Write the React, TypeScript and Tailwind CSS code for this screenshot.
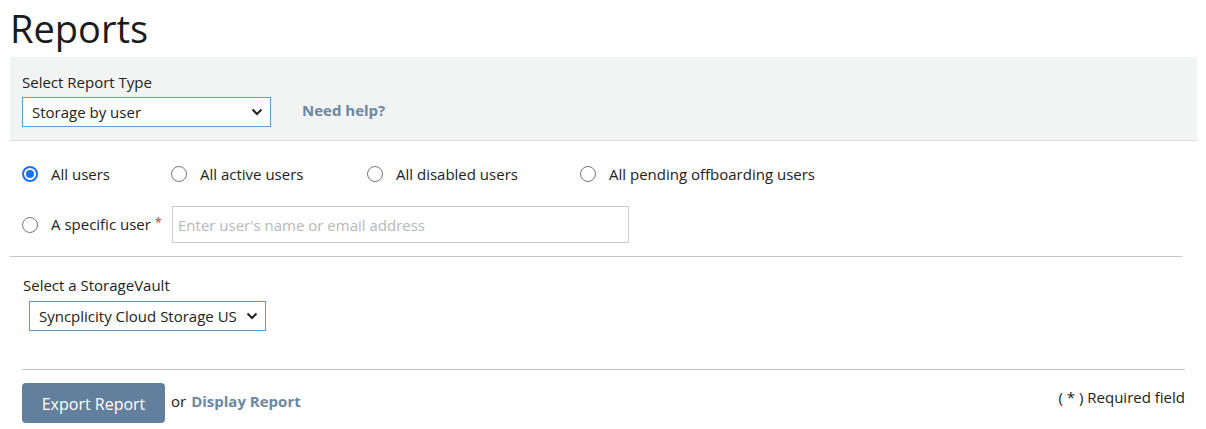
import { useState } from 'react';

const font = { fontFamily: '"Open Sans", "Noto Sans", sans-serif' };

function Chevron() {
  return (
    <svg width="12" height="8" viewBox="0 0 12 8" className="text-[#222]">
      <path d="M1.5 1.5 L6 6 L10.5 1.5" fill="none" stroke="currentColor" strokeWidth="2" />
    </svg>
  );
}

function Radio({ checked, label, onClick }: { checked: boolean; label: React.ReactNode; onClick: () => void }) {
  return (
    <label onClick={onClick} className="flex items-center cursor-pointer">
      {checked ? (
        <span className="w-[16px] h-[16px] rounded-full border-2 border-[#1a73e8] flex items-center justify-center">
          <span className="w-[8px] h-[8px] rounded-full bg-[#1a73e8]"></span>
        </span>
      ) : (
        <span className="w-[16px] h-[16px] rounded-full border border-[#767676] bg-white"></span>
      )}
      <span className="ml-[13px] text-[#222]">{label}</span>
    </label>
  );
}

export default function App() {
  const [scope, setScope] = useState('all');

  return (
    <div className="bg-white w-[1206px] h-[429px] overflow-hidden text-[15px] text-[#222]" style={font}>
      <h1 className="ml-[10px] pt-[1px] text-[38px] leading-[54px] text-[#1b1b1b]">Reports</h1>

      {/* Report type */}
      <div className="ml-[10px] mr-[9px] mt-[2px] h-[84px] bg-[#f2f3f3] border-b border-[#dcdcdc] pl-[12px] pt-[15px]">
        <div className="leading-[20px]">Select Report Type</div>
        <div className="flex items-center mt-[5px]">
          <div className="w-[249px] h-[30px] bg-white border border-[#5aa0d8] flex items-center justify-between pl-[9px] pr-[7px]">
            <span>Storage by user</span>
            <Chevron />
          </div>
          <a className="ml-[31px] font-bold text-[#6c87a3] -mt-[4px]">Need help?</a>
        </div>
      </div>

      {/* Users */}
      <div className="ml-[22px] mt-[21px] flex items-center h-[24px]">
        <div className="w-[149px]"><Radio checked={scope === 'all'} label="All users" onClick={() => setScope('all')} /></div>
        <div className="w-[196px]"><Radio checked={scope === 'active'} label="All active users" onClick={() => setScope('active')} /></div>
        <div className="w-[213px]"><Radio checked={scope === 'disabled'} label="All disabled users" onClick={() => setScope('disabled')} /></div>
        <Radio checked={scope === 'pending'} label="All pending offboarding users" onClick={() => setScope('pending')} />
      </div>
      <div className="ml-[22px] mt-[20px] flex items-center">
        <div className="w-[150px]">
          <Radio
            checked={scope === 'specific'}
            label={<>A specific user <span className="text-[#e0262c] text-[13px] align-top">*</span></>}
            onClick={() => setScope('specific')}
          />
        </div>
        <input
          className="w-[457px] h-[37px] border border-[#cccccc] px-[5px] text-[15px] placeholder:text-[#b8b8b8] outline-none"
          placeholder="Enter user's name or email address"
        />
      </div>
      <div className="ml-[10px] w-[1172px] mt-[13px] border-t border-[#c4c4c4]"></div>

      {/* Vault */}
      <div className="ml-[23px] mt-[18px] leading-[20px]">Select a StorageVault</div>
      <div className="ml-[29px] mt-[6px] w-[237px] h-[30px] border border-[#5aa0d8] flex items-center justify-between pl-[9px] pr-[7px]">
        <span>Syncplicity Cloud Storage US</span>
        <Chevron />
      </div>
      <div className="ml-[22px] w-[1163px] mt-[38px] border-t border-[#c4c4c4]"></div>

      {/* Actions */}
      <div className="ml-[22px] mr-[21px] mt-[13px] flex items-start justify-between">
        <div className="flex items-center">
          <button className="w-[143px] h-[40px] rounded-[4px] bg-[#637f9e] text-white text-[16px] pt-[2px]">Export Report</button>
          <span className="ml-[6px] -mt-[4px]">or</span>
          <a className="ml-[5px] -mt-[4px] font-bold text-[#6c87a3]">Display Report</a>
        </div>
        <span className="mt-[3px]">( * ) Required field</span>
      </div>
    </div>
  );
}
